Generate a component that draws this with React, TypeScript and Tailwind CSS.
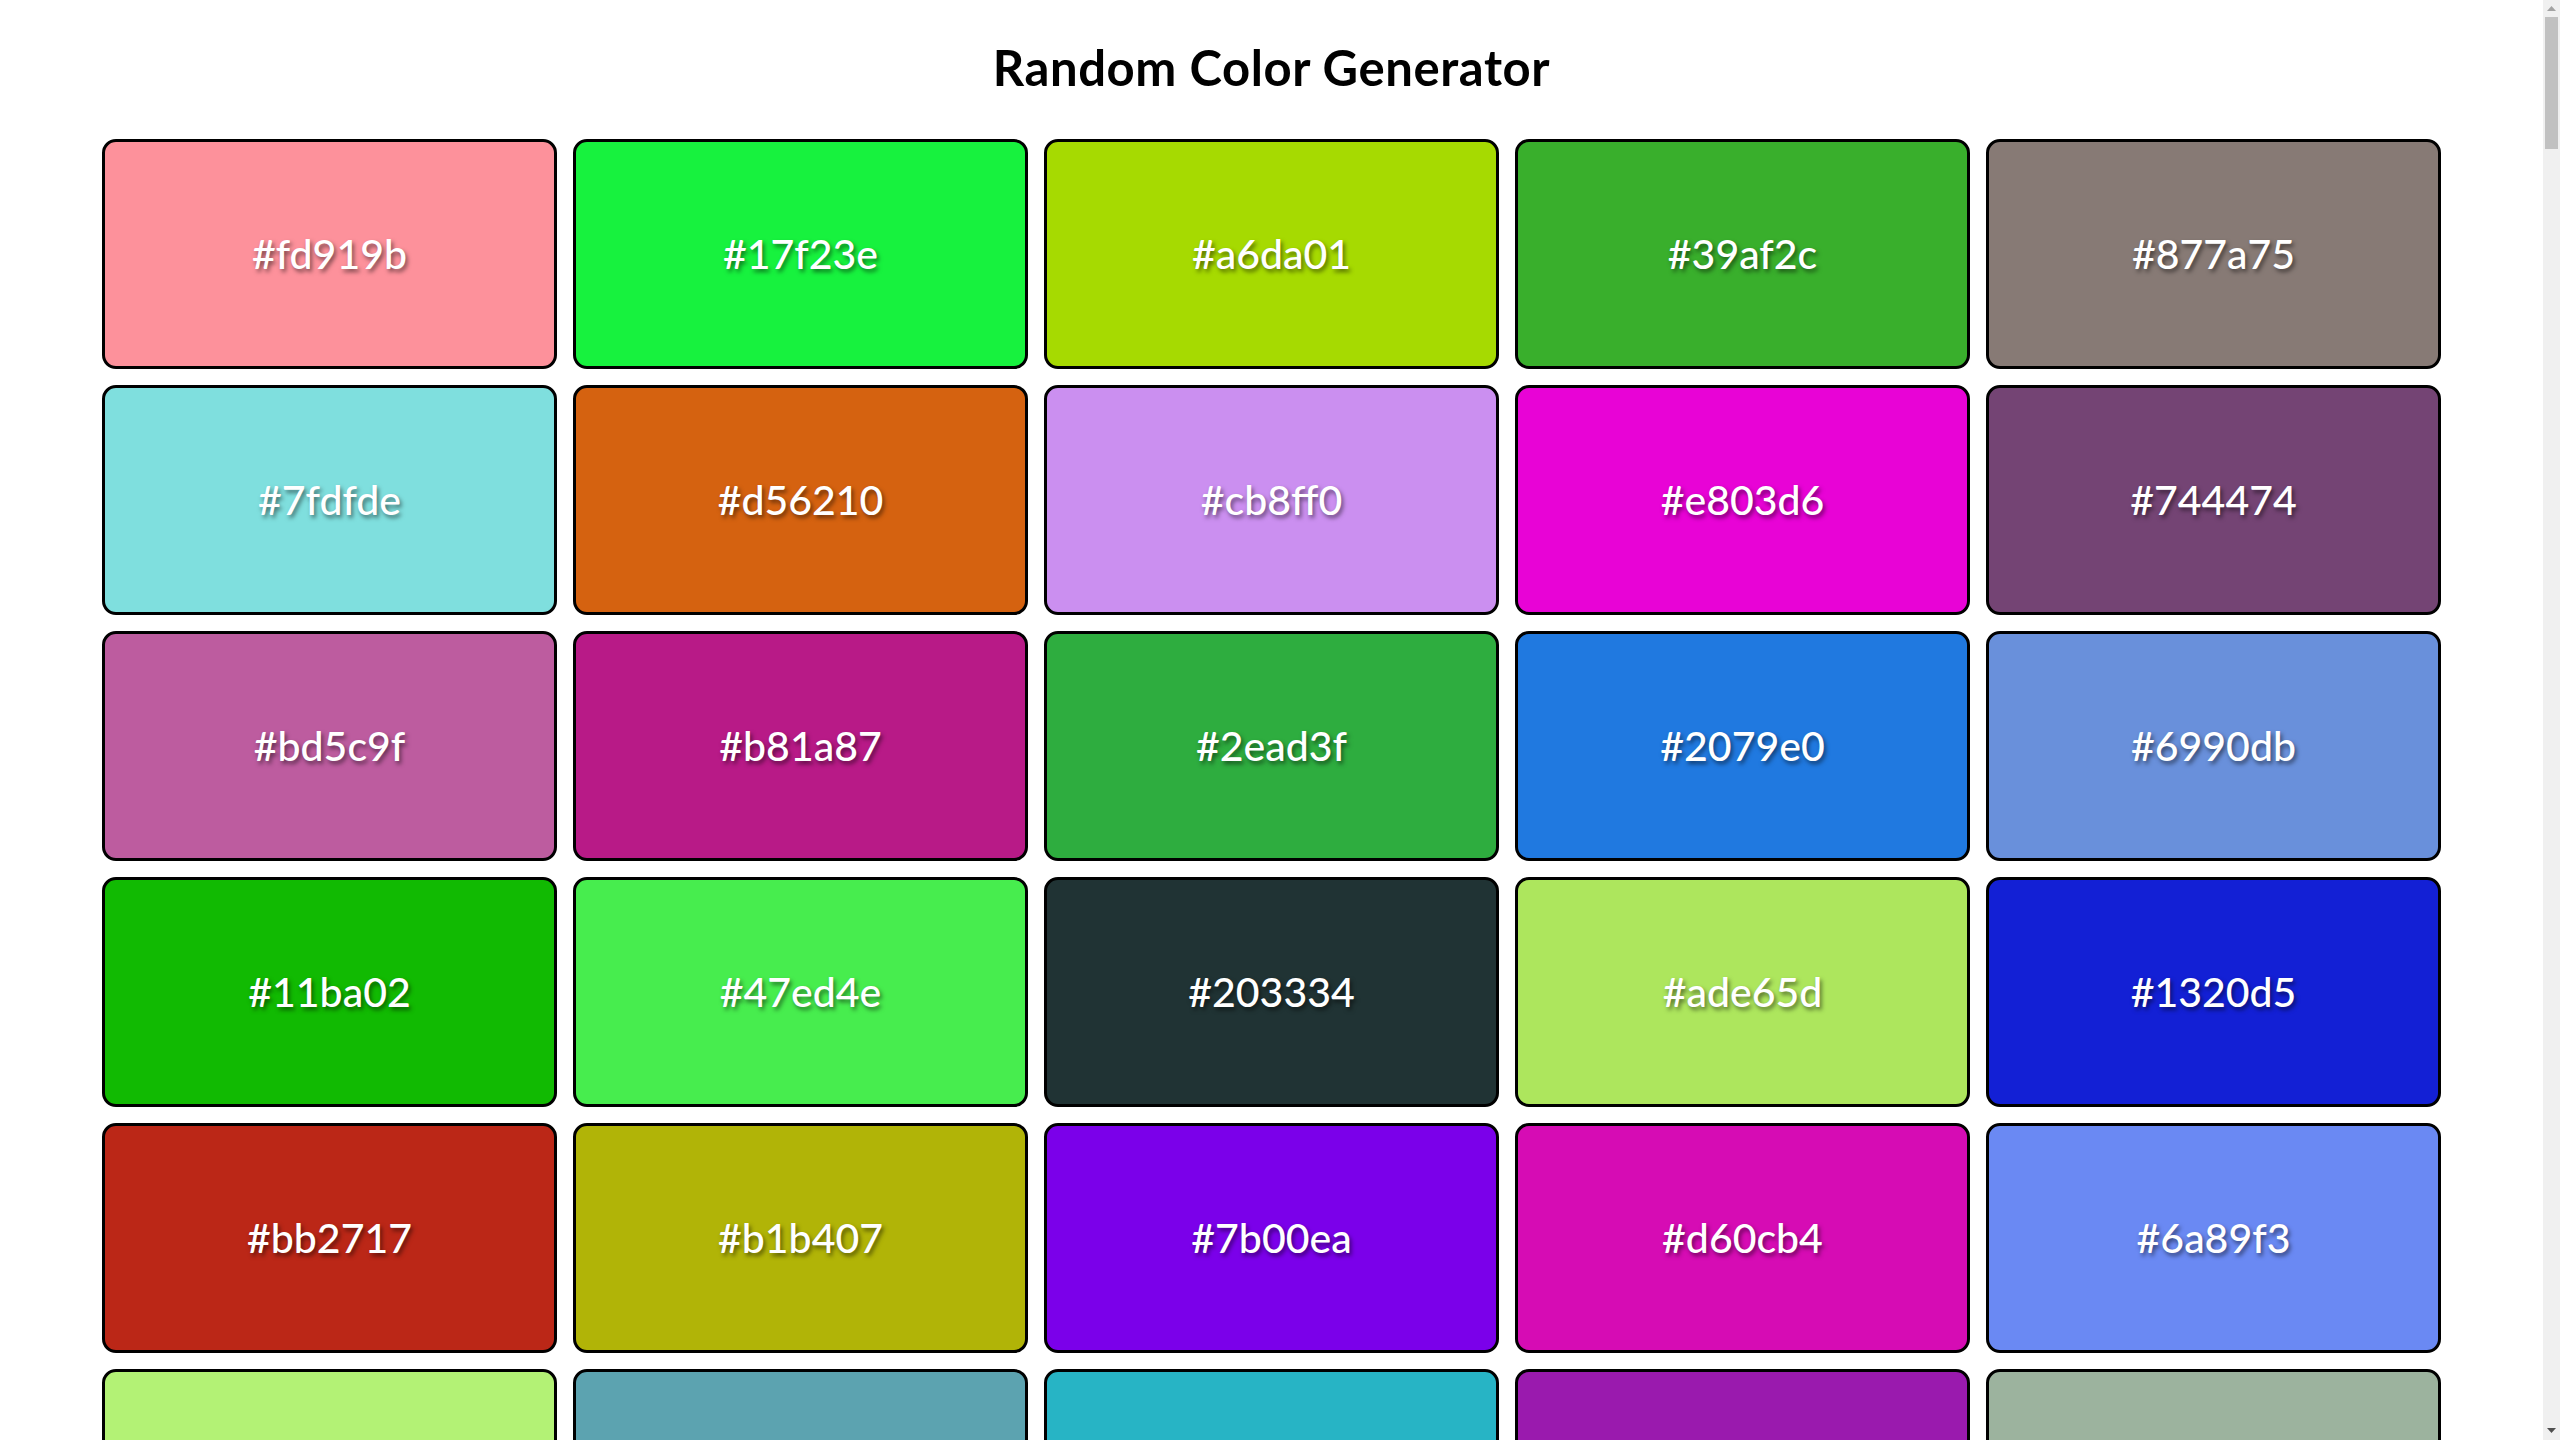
import React from "react";

const colors: string[] = [
  "#fd919b", "#17f23e", "#a6da01", "#39af2c", "#877a75",
  "#7fdfde", "#d56210", "#cb8ff0", "#e803d6", "#744474",
  "#bd5c9f", "#b81a87", "#2ead3f", "#2079e0", "#6990db",
  "#11ba02", "#47ed4e", "#203334", "#ade65d", "#1320d5",
  "#bb2717", "#b1b407", "#7b00ea", "#d60cb4", "#6a89f3",
  "#b3f275", "#5ca3b0", "#27b4c5", "#9a1aae", "#9cb39e",
];

const ColorCard: React.FC<{ hex: string }> = ({ hex }) => {
  return (
    <div
      className="h-[230px] rounded-[14px] border-[3px] border-black flex items-center justify-center"
      style={{ backgroundColor: hex }}
    >
      <span className="text-white text-[41px] font-medium [text-shadow:2px_3px_4px_rgba(0,0,0,0.5)]">
        {hex}
      </span>
    </div>
  );
};

// fake classic scrollbar, the page in the shot had one
const ScrollBar: React.FC = () => (
  <div className="w-[17px] shrink-0 h-full bg-[#f0f0f0] flex flex-col items-center">
    <svg width="9" height="6" viewBox="0 0 9 6" className="mt-[6px]">
      <path d="M0 5 L4.5 0 L9 5 Z" fill="#a3a3a3" />
    </svg>
    <div className="mt-[5px] w-[13px] h-[132px] bg-[#c1c1c1]" />
    <div className="flex-1" />
    <svg width="9" height="6" viewBox="0 0 9 6" className="mb-[6px]">
      <path d="M0 0 L9 0 L4.5 5 Z" fill="#505050" />
    </svg>
  </div>
);

const App: React.FC = () => {
  return (
    <div className="h-screen flex overflow-hidden bg-white font-['Lato','Liberation_Sans',sans-serif]">
      <div className="flex-1 pt-[38px] pb-10">
        <h1 className="text-center text-[49px] leading-[58px] font-bold tracking-[0.6px] text-black mb-[43px]">
          Random Color Generator
        </h1>
        <div className="w-[2339px] mx-auto grid grid-cols-5 gap-4">
          {colors.map((c, i) => (
            <ColorCard key={i} hex={c} />
          ))}
        </div>
      </div>
      <ScrollBar />
    </div>
  );
};

export default App;
